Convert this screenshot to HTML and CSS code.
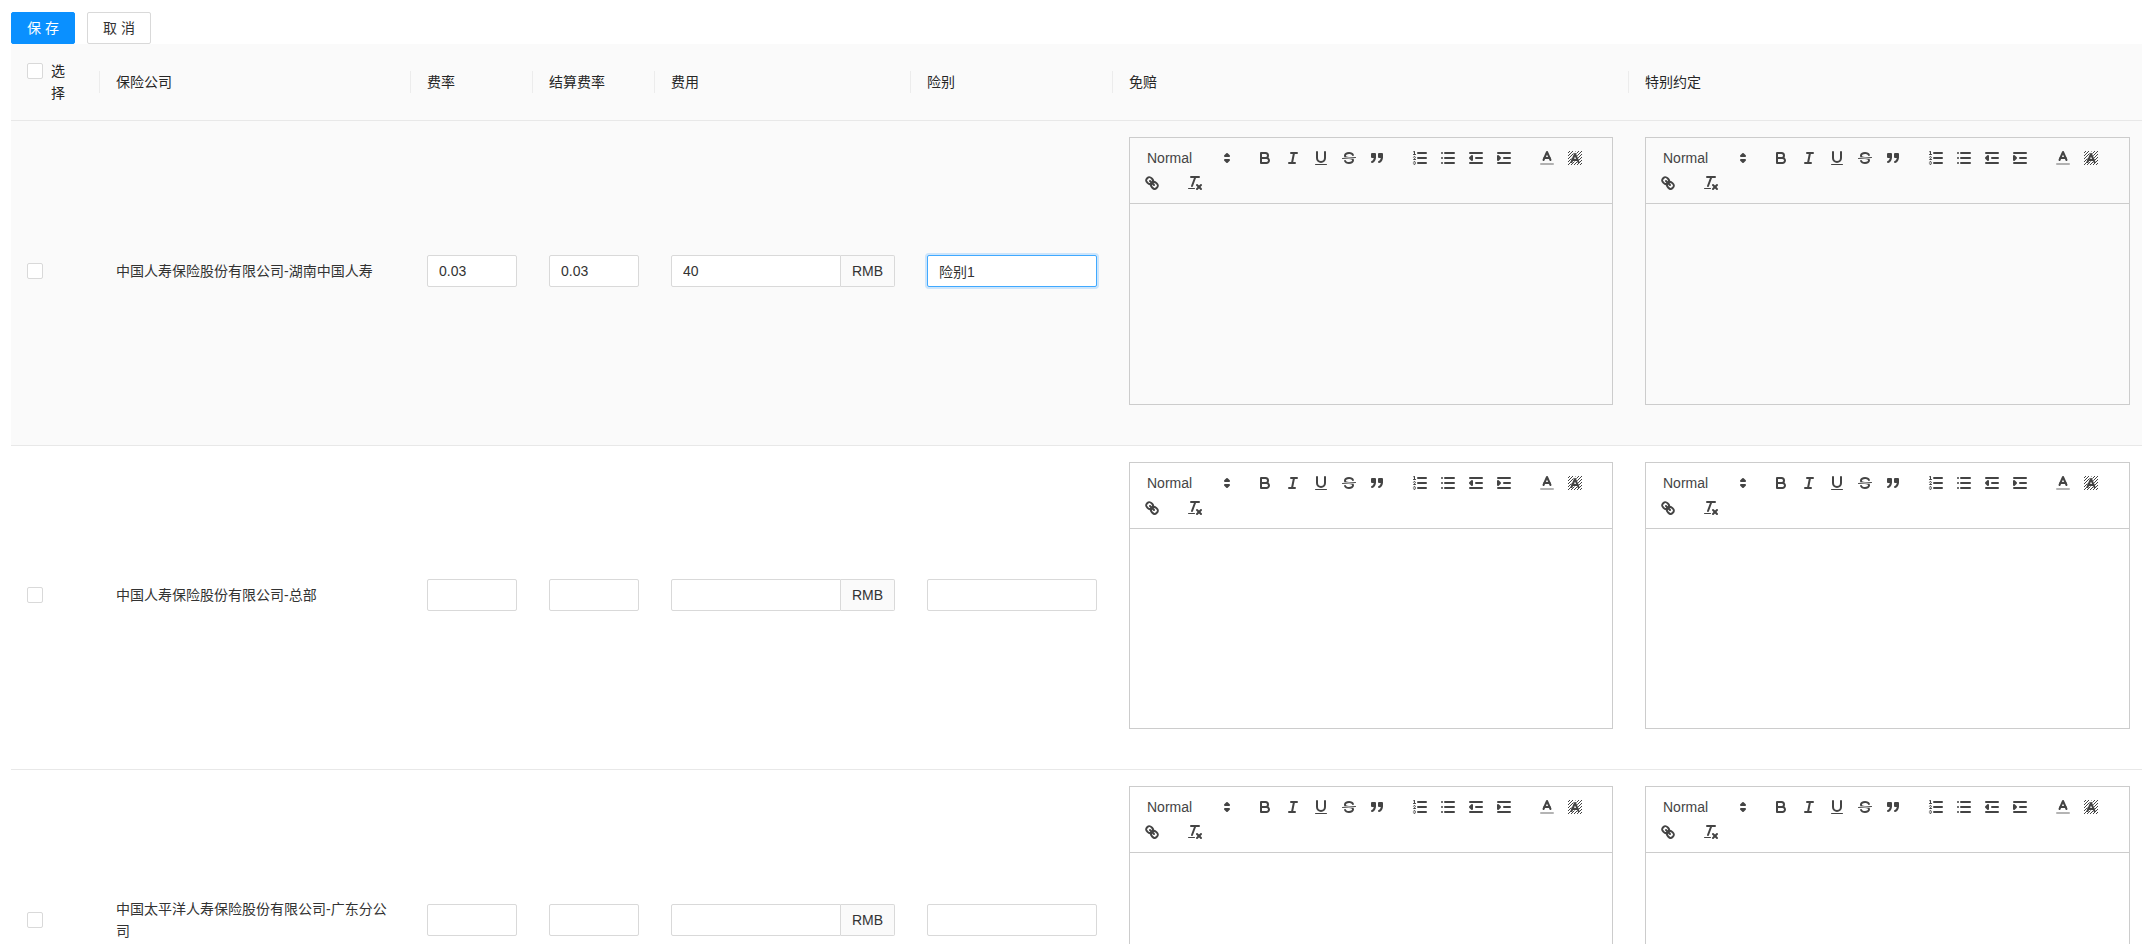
FILE: index.html
```html
<!DOCTYPE html>
<html lang="zh-CN">
<head>
<meta charset="utf-8">
<title>保险公司</title>
<link rel="stylesheet" href="styles.css">
</head>
<body>
<svg class="icon-defs" aria-hidden="true">
  <defs>
    <pattern id="hatch" width="3" height="3" patternUnits="userSpaceOnUse">
      <rect class="ql-fill" x="2" y="0" width="1" height="1"/>
      <rect class="ql-fill" x="1" y="1" width="1" height="1"/>
      <rect class="ql-fill" x="0" y="2" width="1" height="1"/>
    </pattern>
    <mask id="a-cut" maskUnits="userSpaceOnUse" x="0" y="0" width="18" height="18">
      <rect x="0" y="0" width="18" height="18" fill="#fff"/>
      <polyline points="5.5 13 9 5 12.5 13" fill="none" stroke="#000" stroke-width="3"/>
      <line x1="11.63" x2="6.38" y1="11" y2="11" stroke="#000" stroke-width="3"/>
    </mask>
  </defs>
  <symbol id="i-arrows" viewBox="0 0 18 18"><polygon class="ql-stroke" points="7 11 9 13 11 11 7 11"/><polygon class="ql-stroke" points="7 7 9 5 11 7 7 7"/></symbol>
  <symbol id="i-bold" viewBox="0 0 18 18"><path class="ql-stroke" d="M5,4H9.5A2.5,2.5,0,0,1,12,6.5v0A2.5,2.5,0,0,1,9.5,9H5A0,0,0,0,1,5,9V4A0,0,0,0,1,5,4Z"/><path class="ql-stroke" d="M5,9h5.5A2.5,2.5,0,0,1,13,11.5v0A2.5,2.5,0,0,1,10.5,14H5a0,0,0,0,1,0,0V9A0,0,0,0,1,5,9Z"/></symbol>
  <symbol id="i-italic" viewBox="0 0 18 18"><line class="ql-stroke" x1="7" x2="13" y1="4" y2="4"/><line class="ql-stroke" x1="5" x2="11" y1="14" y2="14"/><line class="ql-stroke" x1="8" x2="10" y1="14" y2="4"/></symbol>
  <symbol id="i-underline" viewBox="0 0 18 18"><path class="ql-stroke" d="M5,3V9a4.012,4.012,0,0,0,4,4H9a4.012,4.012,0,0,0,4-4V3"/><rect class="ql-fill" height="1" rx="0.5" ry="0.5" width="12" x="3" y="15"/></symbol>
  <symbol id="i-strike" viewBox="0 0 18 18"><line class="ql-stroke ql-thin" x1="15.5" x2="2.5" y1="8.5" y2="9.5"/><path class="ql-fill" d="M9.007,8C6.542,7.791,6,7.519,6,6.5,6,5.792,7.283,5,9,5c1.571,0,2.765.679,2.969,1.309a1,1,0,0,0,1.9-.617C13.356,4.106,11.354,3,9,3,6.2,3,4,4.538,4,6.5a3.2,3.2,0,0,0,.5,1.843Z"/><path class="ql-fill" d="M8.984,10C11.457,10.208,12,10.479,12,11.5c0,.708-1.283,1.5-3,1.5-1.571,0-2.765-.679-2.969-1.309a1,1,0,1,0-1.9.617C4.644,13.894,6.646,15,9,15c2.8,0,5-1.538,5-3.5a3.2,3.2,0,0,0-.5-1.843Z"/></symbol>
  <symbol id="i-quote" viewBox="0 0 18 18"><rect class="ql-fill ql-stroke" height="3" width="3" x="4" y="5"/><rect class="ql-fill ql-stroke" height="3" width="3" x="11" y="5"/><path class="ql-fill ql-stroke" d="M7,8c0,4.031-3,5-3,5"/><path class="ql-fill ql-stroke" d="M14,8c0,4.031-3,5-3,5"/></symbol>
  <symbol id="i-ol" viewBox="0 0 18 18"><line class="ql-stroke" x1="7" x2="15" y1="4" y2="4"/><line class="ql-stroke" x1="7" x2="15" y1="9" y2="9"/><line class="ql-stroke" x1="7" x2="15" y1="14" y2="14"/><line class="ql-stroke ql-thin" x1="2.5" x2="4.5" y1="5.5" y2="5.5"/><path class="ql-fill" d="M3.5,6A0.5,0.5,0,0,1,3,5.5V3.085l-0.276.138A0.5,0.5,0,0,1,2.053,3c-0.124-.247-0.023-0.324.224-0.447l1-.5A0.5,0.5,0,0,1,4,2.5v3A0.5,0.5,0,0,1,3.5,6Z"/><path class="ql-stroke ql-thin" d="M4.5,10.5h-2c0-.234,1.85-1.076,1.85-2.234A0.959,0.959,0,0,0,2.5,8.156"/><path class="ql-stroke ql-thin" d="M2.5,14.846a0.959,0.959,0,0,0,1.85-.109A0.7,0.7,0,0,0,3.75,14a0.688,0.688,0,0,0,.6-0.736,0.959,0.959,0,0,0-1.85-.109"/></symbol>
  <symbol id="i-ul" viewBox="0 0 18 18"><line class="ql-stroke" x1="6" x2="15" y1="4" y2="4"/><line class="ql-stroke" x1="6" x2="15" y1="9" y2="9"/><line class="ql-stroke" x1="6" x2="15" y1="14" y2="14"/><line class="ql-stroke" x1="3" x2="3" y1="4" y2="4"/><line class="ql-stroke" x1="3" x2="3" y1="9" y2="9"/><line class="ql-stroke" x1="3" x2="3" y1="14" y2="14"/></symbol>
  <symbol id="i-outdent" viewBox="0 0 18 18"><line class="ql-stroke" x1="3" x2="15" y1="14" y2="14"/><line class="ql-stroke" x1="3" x2="15" y1="4" y2="4"/><line class="ql-stroke" x1="9" x2="15" y1="9" y2="9"/><polyline class="ql-stroke ql-solid" points="5 7 5 11 3 9 5 7"/></symbol>
  <symbol id="i-indent" viewBox="0 0 18 18"><line class="ql-stroke" x1="3" x2="15" y1="14" y2="14"/><line class="ql-stroke" x1="3" x2="15" y1="4" y2="4"/><line class="ql-stroke" x1="9" x2="15" y1="9" y2="9"/><polyline class="ql-stroke ql-solid" points="3 7 3 11 5 9 3 7"/></symbol>
  <symbol id="i-color" viewBox="0 0 18 18"><line class="ql-stroke ql-faint" x1="3" x2="15" y1="15" y2="15"/><polyline class="ql-stroke" points="5.5 11 9 3 12.5 11"/><line class="ql-stroke" x1="11.63" x2="6.38" y1="9" y2="9"/></symbol>
  <symbol id="i-background" viewBox="0 0 18 18"><rect x="2" y="2" width="14" height="14" fill="url(#hatch)" mask="url(#a-cut)"/><polyline class="ql-stroke" points="5.5 13 9 5 12.5 13"/><line class="ql-stroke" x1="11.63" x2="6.38" y1="11" y2="11"/></symbol>
  <symbol id="i-link" viewBox="0 0 18 18"><line class="ql-stroke" x1="7" x2="11" y1="7" y2="11"/><path class="ql-stroke" d="M8.9,4.577a3.476,3.476,0,0,1,.36,4.679A3.476,3.476,0,0,1,4.577,8.9C3.185,7.5,2.035,6.4,4.217,4.217S7.5,3.185,8.9,4.577Z"/><path class="ql-stroke" d="M13.423,9.1a3.476,3.476,0,0,0-4.679-.36,3.476,3.476,0,0,0,.36,4.679c1.392,1.392,2.5,2.542,4.679.36S14.815,10.5,13.423,9.1Z"/></symbol>
  <symbol id="i-clean" viewBox="0 0 18 18"><line class="ql-stroke" x1="5" x2="13" y1="3" y2="3"/><line class="ql-stroke" x1="6" x2="9.35" y1="12" y2="3"/><line class="ql-stroke" x1="11" x2="15" y1="11" y2="15"/><line class="ql-stroke" x1="15" x2="11" y1="11" y2="15"/><rect class="ql-fill" height="1" rx="0.5" ry="0.5" width="7" x="2" y="14"/></symbol>
</svg>

<div class="actions">
  <button class="btn btn-primary" type="button">保 存</button>
  <button class="btn" type="button">取 消</button>
</div>

<table class="grid">
  <colgroup>
    <col class="c-select"><col class="c-company"><col class="c-rate"><col class="c-settle"><col class="c-fee"><col class="c-kind"><col class="c-excl"><col class="c-special">
  </colgroup>
  <thead>
    <tr>
      <th><label class="select-head"><input class="check" type="checkbox"><span class="select-text">选择</span></label></th>
      <th>保险公司</th>
      <th>费率</th>
      <th>结算费率</th>
      <th>费用</th>
      <th>险别</th>
      <th>免赔</th>
      <th>特别约定</th>
    </tr>
  </thead>
  <tbody>
    <tr class="row-active">
      <td><input class="check" type="checkbox"></td>
      <td>中国人寿保险股份有限公司-湖南中国人寿</td>
      <td><input class="field" type="text" value="0.03"></td>
      <td><input class="field" type="text" value="0.03"></td>
      <td><div class="group"><input class="field" type="text" value="40"><span class="addon">RMB</span></div></td>
      <td><input class="field field-focus" type="text" value="险别1"></td>
      <td>
        <div class="editor">
          <div class="toolbar">
            <span class="formats"><span class="picker">Normal<svg class="icon"><use href="#i-arrows"/></svg></span></span>
            <span class="formats"><span class="tool"><svg class="icon"><use href="#i-bold"/></svg></span><span class="tool"><svg class="icon"><use href="#i-italic"/></svg></span><span class="tool"><svg class="icon"><use href="#i-underline"/></svg></span><span class="tool"><svg class="icon"><use href="#i-strike"/></svg></span><span class="tool"><svg class="icon"><use href="#i-quote"/></svg></span></span>
            <span class="formats"><span class="tool"><svg class="icon"><use href="#i-ol"/></svg></span><span class="tool"><svg class="icon"><use href="#i-ul"/></svg></span><span class="tool"><svg class="icon"><use href="#i-outdent"/></svg></span><span class="tool"><svg class="icon"><use href="#i-indent"/></svg></span></span>
            <span class="formats"><span class="tool"><svg class="icon"><use href="#i-color"/></svg></span><span class="tool"><svg class="icon"><use href="#i-background"/></svg></span></span>
            <span class="formats"><span class="tool"><svg class="icon"><use href="#i-link"/></svg></span></span>
            <span class="formats"><span class="tool"><svg class="icon"><use href="#i-clean"/></svg></span></span>
          </div>
          <div class="editor-body"></div>
        </div>
      </td>
      <td class="last">
        <div class="editor">
          <div class="toolbar">
            <span class="formats"><span class="picker">Normal<svg class="icon"><use href="#i-arrows"/></svg></span></span>
            <span class="formats"><span class="tool"><svg class="icon"><use href="#i-bold"/></svg></span><span class="tool"><svg class="icon"><use href="#i-italic"/></svg></span><span class="tool"><svg class="icon"><use href="#i-underline"/></svg></span><span class="tool"><svg class="icon"><use href="#i-strike"/></svg></span><span class="tool"><svg class="icon"><use href="#i-quote"/></svg></span></span>
            <span class="formats"><span class="tool"><svg class="icon"><use href="#i-ol"/></svg></span><span class="tool"><svg class="icon"><use href="#i-ul"/></svg></span><span class="tool"><svg class="icon"><use href="#i-outdent"/></svg></span><span class="tool"><svg class="icon"><use href="#i-indent"/></svg></span></span>
            <span class="formats"><span class="tool"><svg class="icon"><use href="#i-color"/></svg></span><span class="tool"><svg class="icon"><use href="#i-background"/></svg></span></span>
            <span class="formats"><span class="tool"><svg class="icon"><use href="#i-link"/></svg></span></span>
            <span class="formats"><span class="tool"><svg class="icon"><use href="#i-clean"/></svg></span></span>
          </div>
          <div class="editor-body"></div>
        </div>
      </td>
    </tr>
    <tr>
      <td><input class="check" type="checkbox"></td>
      <td>中国人寿保险股份有限公司-总部</td>
      <td><input class="field" type="text"></td>
      <td><input class="field" type="text"></td>
      <td><div class="group"><input class="field" type="text"><span class="addon">RMB</span></div></td>
      <td><input class="field" type="text"></td>
      <td>
        <div class="editor">
          <div class="toolbar">
            <span class="formats"><span class="picker">Normal<svg class="icon"><use href="#i-arrows"/></svg></span></span>
            <span class="formats"><span class="tool"><svg class="icon"><use href="#i-bold"/></svg></span><span class="tool"><svg class="icon"><use href="#i-italic"/></svg></span><span class="tool"><svg class="icon"><use href="#i-underline"/></svg></span><span class="tool"><svg class="icon"><use href="#i-strike"/></svg></span><span class="tool"><svg class="icon"><use href="#i-quote"/></svg></span></span>
            <span class="formats"><span class="tool"><svg class="icon"><use href="#i-ol"/></svg></span><span class="tool"><svg class="icon"><use href="#i-ul"/></svg></span><span class="tool"><svg class="icon"><use href="#i-outdent"/></svg></span><span class="tool"><svg class="icon"><use href="#i-indent"/></svg></span></span>
            <span class="formats"><span class="tool"><svg class="icon"><use href="#i-color"/></svg></span><span class="tool"><svg class="icon"><use href="#i-background"/></svg></span></span>
            <span class="formats"><span class="tool"><svg class="icon"><use href="#i-link"/></svg></span></span>
            <span class="formats"><span class="tool"><svg class="icon"><use href="#i-clean"/></svg></span></span>
          </div>
          <div class="editor-body"></div>
        </div>
      </td>
      <td class="last">
        <div class="editor">
          <div class="toolbar">
            <span class="formats"><span class="picker">Normal<svg class="icon"><use href="#i-arrows"/></svg></span></span>
            <span class="formats"><span class="tool"><svg class="icon"><use href="#i-bold"/></svg></span><span class="tool"><svg class="icon"><use href="#i-italic"/></svg></span><span class="tool"><svg class="icon"><use href="#i-underline"/></svg></span><span class="tool"><svg class="icon"><use href="#i-strike"/></svg></span><span class="tool"><svg class="icon"><use href="#i-quote"/></svg></span></span>
            <span class="formats"><span class="tool"><svg class="icon"><use href="#i-ol"/></svg></span><span class="tool"><svg class="icon"><use href="#i-ul"/></svg></span><span class="tool"><svg class="icon"><use href="#i-outdent"/></svg></span><span class="tool"><svg class="icon"><use href="#i-indent"/></svg></span></span>
            <span class="formats"><span class="tool"><svg class="icon"><use href="#i-color"/></svg></span><span class="tool"><svg class="icon"><use href="#i-background"/></svg></span></span>
            <span class="formats"><span class="tool"><svg class="icon"><use href="#i-link"/></svg></span></span>
            <span class="formats"><span class="tool"><svg class="icon"><use href="#i-clean"/></svg></span></span>
          </div>
          <div class="editor-body"></div>
        </div>
      </td>
    </tr>
    <tr>
      <td><input class="check" type="checkbox"></td>
      <td>中国太平洋人寿保险股份有限公司-广东分公司</td>
      <td><input class="field" type="text"></td>
      <td><input class="field" type="text"></td>
      <td><div class="group"><input class="field" type="text"><span class="addon">RMB</span></div></td>
      <td><input class="field" type="text"></td>
      <td>
        <div class="editor">
          <div class="toolbar">
            <span class="formats"><span class="picker">Normal<svg class="icon"><use href="#i-arrows"/></svg></span></span>
            <span class="formats"><span class="tool"><svg class="icon"><use href="#i-bold"/></svg></span><span class="tool"><svg class="icon"><use href="#i-italic"/></svg></span><span class="tool"><svg class="icon"><use href="#i-underline"/></svg></span><span class="tool"><svg class="icon"><use href="#i-strike"/></svg></span><span class="tool"><svg class="icon"><use href="#i-quote"/></svg></span></span>
            <span class="formats"><span class="tool"><svg class="icon"><use href="#i-ol"/></svg></span><span class="tool"><svg class="icon"><use href="#i-ul"/></svg></span><span class="tool"><svg class="icon"><use href="#i-outdent"/></svg></span><span class="tool"><svg class="icon"><use href="#i-indent"/></svg></span></span>
            <span class="formats"><span class="tool"><svg class="icon"><use href="#i-color"/></svg></span><span class="tool"><svg class="icon"><use href="#i-background"/></svg></span></span>
            <span class="formats"><span class="tool"><svg class="icon"><use href="#i-link"/></svg></span></span>
            <span class="formats"><span class="tool"><svg class="icon"><use href="#i-clean"/></svg></span></span>
          </div>
          <div class="editor-body"></div>
        </div>
      </td>
      <td class="last">
        <div class="editor">
          <div class="toolbar">
            <span class="formats"><span class="picker">Normal<svg class="icon"><use href="#i-arrows"/></svg></span></span>
            <span class="formats"><span class="tool"><svg class="icon"><use href="#i-bold"/></svg></span><span class="tool"><svg class="icon"><use href="#i-italic"/></svg></span><span class="tool"><svg class="icon"><use href="#i-underline"/></svg></span><span class="tool"><svg class="icon"><use href="#i-strike"/></svg></span><span class="tool"><svg class="icon"><use href="#i-quote"/></svg></span></span>
            <span class="formats"><span class="tool"><svg class="icon"><use href="#i-ol"/></svg></span><span class="tool"><svg class="icon"><use href="#i-ul"/></svg></span><span class="tool"><svg class="icon"><use href="#i-outdent"/></svg></span><span class="tool"><svg class="icon"><use href="#i-indent"/></svg></span></span>
            <span class="formats"><span class="tool"><svg class="icon"><use href="#i-color"/></svg></span><span class="tool"><svg class="icon"><use href="#i-background"/></svg></span></span>
            <span class="formats"><span class="tool"><svg class="icon"><use href="#i-link"/></svg></span></span>
            <span class="formats"><span class="tool"><svg class="icon"><use href="#i-clean"/></svg></span></span>
          </div>
          <div class="editor-body"></div>
        </div>
      </td>
    </tr>
  </tbody>
</table>
</body>
</html>
```
FILE: styles.css
```css
* { box-sizing: border-box; }

html, body {
  height: 944px;
  overflow: hidden;
}

body {
  margin: 0;
  padding: 12px 0 0 11px;
  background: #fff;
  color: #333;
  font: 14px/22px "Liberation Sans", "Noto Sans CJK SC", sans-serif;
}

.icon-defs {
  position: absolute;
  width: 0;
  height: 0;
  overflow: hidden;
}

.actions {
  display: flex;
  gap: 12px;
}

.btn {
  height: 32px;
  width: 64px;
  padding: 0;
  border: 1px solid #d9d9d9;
  border-radius: 2px;
  background: #fff;
  color: #333;
  font: inherit;
}

.btn-primary {
  border-color: #0a90ff;
  background: #0a90ff;
  color: #fff;
}

.grid {
  width: 2131px;
  table-layout: fixed;
  border-collapse: separate;
  border-spacing: 0;
}

.c-select { width: 89px; }
.c-company { width: 311px; }
.c-rate { width: 122px; }
.c-settle { width: 122px; }
.c-fee { width: 256px; }
.c-kind { width: 202px; }
.c-excl { width: 516px; }
.c-special { width: 513px; }

th {
  position: relative;
  padding: 16px;
  border-bottom: 1px solid #e8e8e8;
  background: #fafafa;
  color: #262626;
  font-weight: 400;
  text-align: left;
}

th:not(:last-child)::after {
  content: "";
  position: absolute;
  top: 27px;
  right: 0;
  width: 1px;
  height: 22px;
  background: #ececec;
}

td {
  padding: 16px 16px 40px;
  border-bottom: 1px solid #e8e8e8;
  vertical-align: middle;
}

td.last { padding-right: 12px; }

.row-active td { background: #fafafa; }

.select-head {
  display: flex;
  gap: 8px;
  align-items: flex-start;
}

.select-text { width: 14px; }

.select-head .check { margin-top: 3px; }

.check {
  appearance: none;
  display: block;
  flex: none;
  width: 16px;
  height: 16px;
  margin: 0;
  border: 1px solid #d9d9d9;
  border-radius: 2px;
  background: #fff;
}

.field {
  display: block;
  width: 100%;
  min-width: 0;
  height: 32px;
  padding: 4px 11px;
  border: 1px solid #d9d9d9;
  border-radius: 2px;
  outline: 0;
  background: #fff;
  color: #333;
  font: inherit;
}

.field-focus {
  border-color: #40a9ff;
  box-shadow: 0 0 0 2px rgba(24, 144, 255, .2);
}

.group { display: flex; }

.group .field {
  flex: 1;
  border-radius: 2px 0 0 2px;
}

.addon {
  flex: none;
  height: 32px;
  padding: 4px 11px;
  border: 1px solid #d9d9d9;
  border-left: 0;
  border-radius: 0 2px 2px 0;
  background: #fafafa;
}

.editor {
  border: 1px solid #ccc;
  color: #444;
}

.toolbar {
  display: flex;
  flex-wrap: wrap;
  row-gap: 1px;
  height: 66px;
  padding: 8px;
  border-bottom: 1px solid #ccc;
}

.formats {
  display: flex;
  height: 24px;
  margin-right: 15px;
}

.picker {
  display: flex;
  align-items: center;
  justify-content: space-between;
  width: 98px;
  height: 24px;
  padding-left: 9px;
  font-weight: 500;
  line-height: 22px;
}

.tool {
  width: 28px;
  height: 24px;
  padding: 3px 5px;
}

.icon {
  display: block;
  width: 18px;
  height: 18px;
}

.editor-body { height: 199.5px; }

.ql-stroke {
  fill: none;
  stroke: #444;
  stroke-width: 2;
  stroke-linecap: round;
  stroke-linejoin: round;
}

.ql-thin { stroke-width: 1; }
.ql-faint { opacity: .4; }
.ql-fill { fill: #444; }
.ql-solid { fill: #444; }
```
